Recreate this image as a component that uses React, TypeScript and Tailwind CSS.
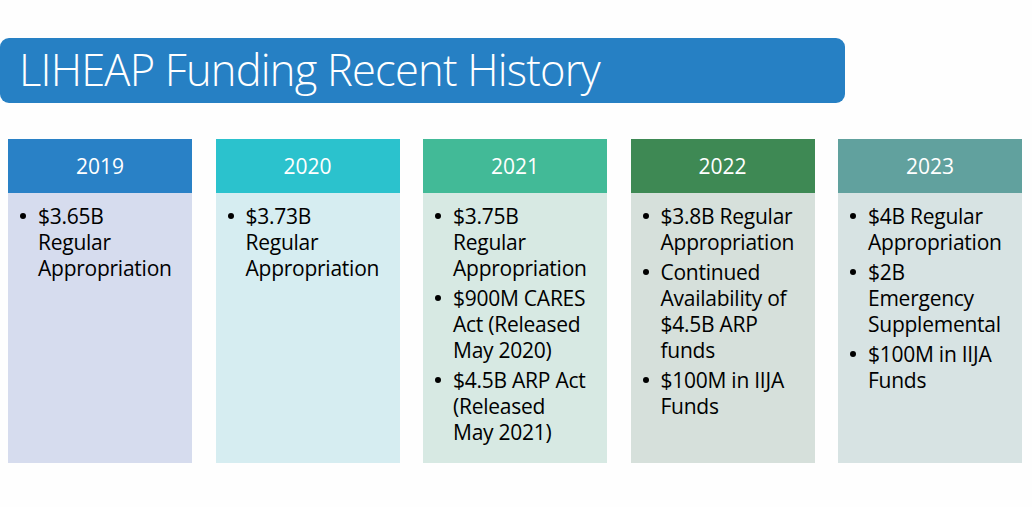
const years = [
  {
    year: "2019",
    head: "bg-[#2981c6]",
    body: "bg-[#d6dcee]",
    items: [["$3.65B", "Regular", "Appropriation"]],
  },
  {
    year: "2020",
    head: "bg-[#2bc2cd]",
    body: "bg-[#d6edf1]",
    items: [["$3.73B", "Regular", "Appropriation"]],
  },
  {
    year: "2021",
    head: "bg-[#42ba97]",
    body: "bg-[#d7e9e3]",
    items: [
      ["$3.75B", "Regular", "Appropriation"],
      ["$900M CARES", "Act (Released", "May 2020)"],
      ["$4.5B ARP Act", "(Released", "May 2021)"],
    ],
  },
  {
    year: "2022",
    head: "bg-[#3e8954]",
    body: "bg-[#d6e0db]",
    items: [
      ["$3.8B Regular", "Appropriation"],
      ["Continued", "Availability of", "$4.5B ARP", "funds"],
      ["$100M in IIJA", "Funds"],
    ],
  },
  {
    year: "2023",
    head: "bg-[#61a19e]",
    body: "bg-[#d7e3e3]",
    items: [
      ["$4B Regular", "Appropriation"],
      ["$2B", "Emergency", "Supplemental"],
      ["$100M in IIJA", "Funds"],
    ],
  },
]

export default function App() {
  return (
    <div
      className="w-[1032px] h-[507px] bg-[#fefefe] overflow-hidden pt-[38px]"
      style={{ fontFamily: '"Open Sans", "Noto Sans", sans-serif' }}
    >
      {/* Title bar */}
      <div className="w-[845px] h-[65px] bg-[#2680c4] rounded-[9px] flex items-center pl-[19px]">
        <h1 className="text-white text-[43.5px] font-light tracking-[-0.8px] leading-none pb-[2px]">
          LIHEAP Funding Recent History
        </h1>
      </div>

      {/* Timeline columns */}
      <div className="ml-[8px] mt-[36px] w-[1014px] grid grid-cols-5 gap-x-[23.5px]">
        {years.map((y) => (
          <div key={y.year} className="flex flex-col h-[324px]">
            <div className={`${y.head} h-[54px] flex items-center justify-center`}>
              <span className="text-white text-[21px] leading-none">{y.year}</span>
            </div>
            <div className={`${y.body} flex-1 pt-[10px] flex flex-col gap-[4px]`}>
              {y.items.map((lines, i) => (
                <div key={i} className="flex">
                  <div className="w-[30px] shrink-0 h-[26px] flex items-center pl-[12px]">
                    <span className="w-[6px] h-[6px] rounded-full bg-black" />
                  </div>
                  <div className="text-[21px] leading-[26px] text-black tracking-[-0.25px]">
                    {lines.map((l) => (
                      <div key={l} className="whitespace-nowrap">
                        {l}
                      </div>
                    ))}
                  </div>
                </div>
              ))}
            </div>
          </div>
        ))}
      </div>
    </div>
  )
}
